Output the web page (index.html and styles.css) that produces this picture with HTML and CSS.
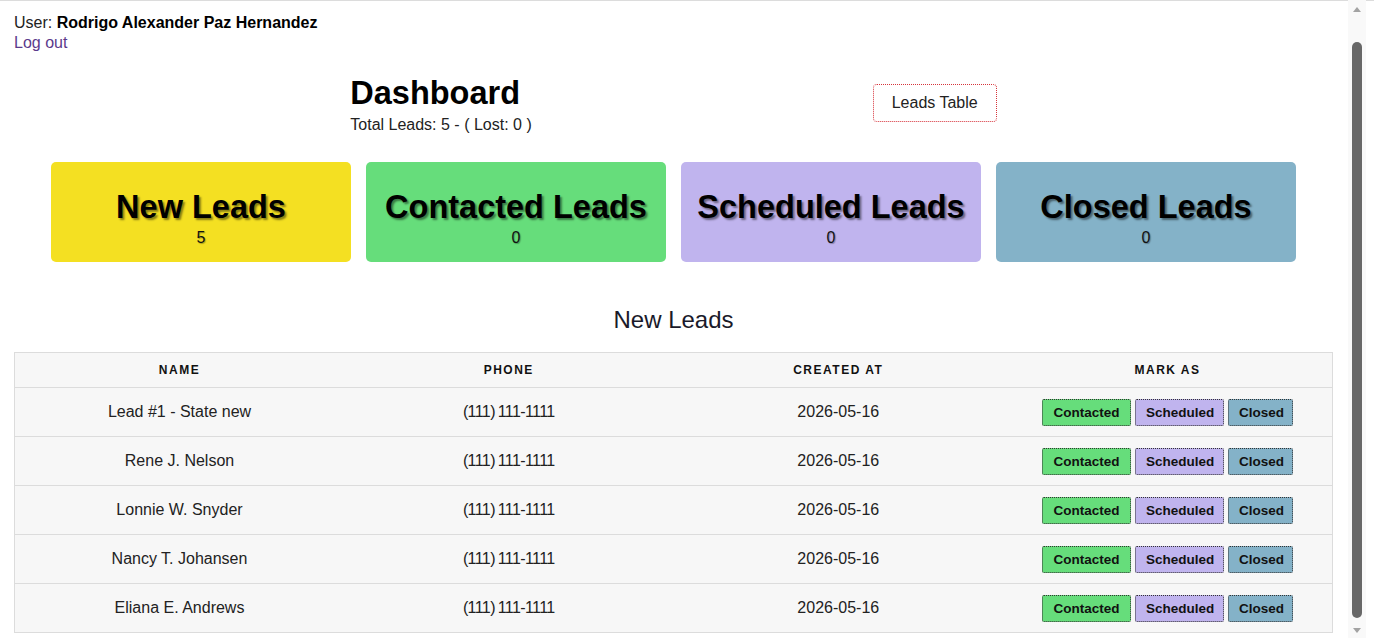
FILE: index.html
```html
<!DOCTYPE html>
<html lang="en">
<head>
<meta charset="utf-8">
<title>Dashboard</title>
<link rel="stylesheet" href="styles.css">
</head>
<body>
<div class="page">
  <div class="user">
    <div>User: <strong>Rodrigo Alexander Paz Hernandez</strong></div>
    <a class="logout" href="#">Log out</a>
  </div>

  <div class="header">
    <div class="title-block">
      <h1>Dashboard</h1>
      <div class="totals">Total Leads: 5 - ( Lost: 0 )</div>
    </div>
    <a class="table-link" href="#">Leads Table</a>
  </div>

  <div class="cards">
    <div class="card card-new"><div class="card-title">New Leads</div><div class="card-count">5</div></div>
    <div class="card card-contacted"><div class="card-title">Contacted Leads</div><div class="card-count">0</div></div>
    <div class="card card-scheduled"><div class="card-title">Scheduled Leads</div><div class="card-count">0</div></div>
    <div class="card card-closed"><div class="card-title">Closed Leads</div><div class="card-count">0</div></div>
  </div>

  <h2 class="section-title">New Leads</h2>

  <table class="leads">
    <thead>
      <tr><th>Name</th><th>Phone</th><th>Created At</th><th>Mark As</th></tr>
    </thead>
    <tbody>
      <tr><td>Lead #1 - State new</td><td class="phone">(111) 111-1111</td><td>2026-05-16</td>
        <td><div class="actions"><button class="btn btn-contacted">Contacted</button><button class="btn btn-scheduled">Scheduled</button><button class="btn btn-closed">Closed</button></div></td></tr>
      <tr><td>Rene J. Nelson</td><td class="phone">(111) 111-1111</td><td>2026-05-16</td>
        <td><div class="actions"><button class="btn btn-contacted">Contacted</button><button class="btn btn-scheduled">Scheduled</button><button class="btn btn-closed">Closed</button></div></td></tr>
      <tr><td>Lonnie W. Snyder</td><td class="phone">(111) 111-1111</td><td>2026-05-16</td>
        <td><div class="actions"><button class="btn btn-contacted">Contacted</button><button class="btn btn-scheduled">Scheduled</button><button class="btn btn-closed">Closed</button></div></td></tr>
      <tr><td>Nancy T. Johansen</td><td class="phone">(111) 111-1111</td><td>2026-05-16</td>
        <td><div class="actions"><button class="btn btn-contacted">Contacted</button><button class="btn btn-scheduled">Scheduled</button><button class="btn btn-closed">Closed</button></div></td></tr>
      <tr><td>Eliana E. Andrews</td><td class="phone">(111) 111-1111</td><td>2026-05-16</td>
        <td><div class="actions"><button class="btn btn-contacted">Contacted</button><button class="btn btn-scheduled">Scheduled</button><button class="btn btn-closed">Closed</button></div></td></tr>
    </tbody>
  </table>
</div>

<div class="scrollbar" aria-hidden="true">
  <span class="arrow arrow-up"></span>
  <span class="thumb"></span>
  <span class="arrow arrow-down"></span>
</div>
</body>
</html>
```

FILE: styles.css
```css
html {
  border-top: 1px solid #dcdcdc;
}
body {
  margin: 0;
  font-family: "Liberation Sans", Arial, sans-serif;
  color: #111;
  background: #fff;
}
.page {
  width: 1319px;
  margin: 0 0 0 14px;
  padding: 12px 0 44px;
}
.user {
  font-size: 16px;
  line-height: 20px;
  color: #222;
}
.user strong {
  color: #000;
}
.logout {
  color: #5b3a8c;
  text-decoration: none;
}
.header {
  display: flex;
  justify-content: center;
  align-items: center;
  gap: 341px;
  margin-top: 22px;
}
.title-block h1 {
  margin: 0;
  padding-bottom: 4px;
  font-size: 32.5px;
  line-height: 36px;
  font-weight: bold;
  color: #000;
}
.totals {
  font-size: 16px;
  line-height: 20px;
  color: #222;
}
.table-link {
  display: block;
  margin-bottom: 4px;
  padding: 10px 18px;
  border: 1px dotted #d6333a;
  border-radius: 4px;
  font-size: 16px;
  line-height: 16px;
  color: #222;
  text-decoration: none;
}
.cards {
  display: flex;
  justify-content: center;
  gap: 15px;
  margin-top: 27px;
}
.card {
  width: 300px;
  height: 100px;
  border-radius: 5px;
  display: flex;
  flex-direction: column;
  align-items: center;
  justify-content: center;
}
.card-title {
  font-size: 32.5px;
  font-weight: bold;
  line-height: 38px;
  color: #000;
  text-shadow: 2px 2px 2px rgba(0, 0, 0, 0.45);
  margin-top: 10px;
}
.card-count {
  margin-top: 3px;
  font-size: 16px;
  line-height: 18px;
  color: #111;
  text-shadow: 1px 1px 1px rgba(0, 0, 0, 0.3);
}
.card-new { background: #f4e022; }
.card-contacted { background: #66dd7b; }
.card-scheduled { background: #c0b4ee; }
.card-closed { background: #84b2c8; }
.section-title {
  margin: 44px 0 18px;
  text-align: center;
  font-size: 24px;
  line-height: 28px;
  font-weight: normal;
  color: #1a1a2a;
}
.leads {
  width: 100%;
  border-collapse: collapse;
  table-layout: fixed;
  background: #f7f7f7;
  border: 1px solid #dcdcdc;
}
.leads th {
  height: 34px;
  padding: 0;
  font-size: 12px;
  letter-spacing: 1.5px;
  font-weight: bold;
  text-transform: uppercase;
  color: #111;
  text-align: center;
  border-bottom: 1px solid #dcdcdc;
}
.leads td {
  height: 48px;
  padding: 0;
  font-size: 16px;
  text-align: center;
  color: #222;
  border-top: 1px solid #dcdcdc;
}
.leads td.phone {
  letter-spacing: -0.6px;
  word-spacing: -1px;
}
.actions {
  display: flex;
  justify-content: center;
  gap: 4px;
}
.btn {
  height: 27px;
  padding: 0 10px;
  border: 1px dotted #333;
  border-radius: 2px;
  font-family: "Liberation Sans", Arial, sans-serif;
  font-size: 13.5px;
  font-weight: bold;
  color: #111;
  cursor: pointer;
}
.btn-contacted { background: #66dd7b; width: 89px; }
.btn-scheduled { background: #c0b4ee; width: 89px; }
.btn-closed { background: #84b2c8; width: 65px; }

.scrollbar {
  position: fixed;
  top: 0;
  right: 8px;
  width: 18px;
  height: 100vh;
  background: #f9f9f9;
  display: flex;
  flex-direction: column;
  align-items: center;
}
.arrow {
  width: 0;
  height: 0;
  border-left: 4px solid transparent;
  border-right: 4px solid transparent;
}
.arrow-up {
  margin-top: 7px;
  border-bottom: 5px solid #a3a3a3;
}
.arrow-down {
  margin-top: 10px;
  border-top: 5px solid #a3a3a3;
}
.thumb {
  margin-top: 30px;
  width: 10px;
  height: 576px;
  border-radius: 5px;
  background: #686868;
}
```
